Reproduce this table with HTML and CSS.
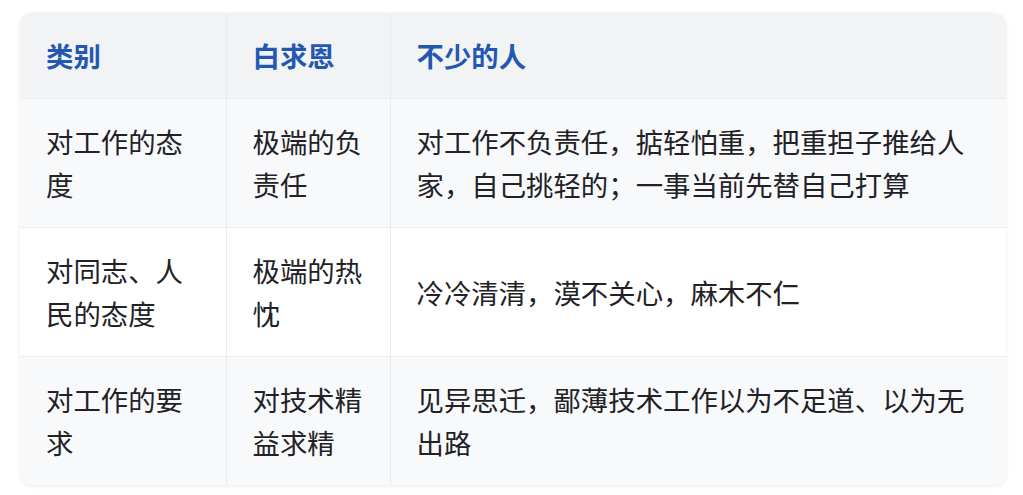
FILE: index.html
```html
<!DOCTYPE html>
<html lang="zh">
<head>
<meta charset="utf-8">
<link rel="stylesheet" href="styles.css">
</head>
<body>
<div class="card">
<table class="tbl">
<colgroup><col class="c1"><col class="c2"><col class="c3"></colgroup>
<thead>
<tr><th>类别</th><th>白求恩</th><th>不少的人</th></tr>
</thead>
<tbody>
<tr class="alt"><td>对工作的态度</td><td>极端的负责任</td><td>对工作不负责任，掂轻怕重，把重担子推给人家，自己挑轻的；一事当前先替自己打算</td></tr>
<tr><td>对同志、人民的态度</td><td>极端的热忱</td><td>冷冷清清，漠不关心，麻木不仁</td></tr>
<tr class="alt"><td>对工作的要求</td><td>对技术精益求精</td><td>见异思迁，鄙薄技术工作以为不足道、以为无出路</td></tr>
</tbody>
</table>
</div>
</body>
</html>
```

FILE: styles.css
```css
html, body { margin: 0; padding: 0; background: #ffffff; }
body {
  padding: 13px 17px 8px 20px;
  font-family: "Noto Sans CJK SC", "Noto Sans", sans-serif;
  color: #222226;
}
.card {
  width: 986px;
  border-radius: 12px;
  overflow: hidden;
  box-shadow: 0 1px 4px rgba(0,0,0,0.08), 0 0 1px rgba(0,0,0,0.06);
  background: #fff;
}
.tbl {
  width: 100%;
  border-collapse: collapse;
  table-layout: fixed;
  font-size: 27.4px;
  line-height: 43px;
}
.c1 { width: 206px; }
.c2 { width: 164px; }
.tbl th, .tbl td {
  padding: 21px 20px 21px 26px;
  text-align: left;
  vertical-align: middle;
  border-right: 1px solid #e8eaee;
  border-bottom: 1px solid #eceef1;
}
.tbl th:last-child, .tbl td:last-child { border-right: none; }
.tbl tbody tr:last-child td { border-bottom: none; }
.tbl th {
  background: #f2f3f5;
  color: #2258b2;
  font-weight: 700;
}
.tbl td { font-weight: 400; }
.tbl tr.alt td { background: #f8f9fb; }
```
